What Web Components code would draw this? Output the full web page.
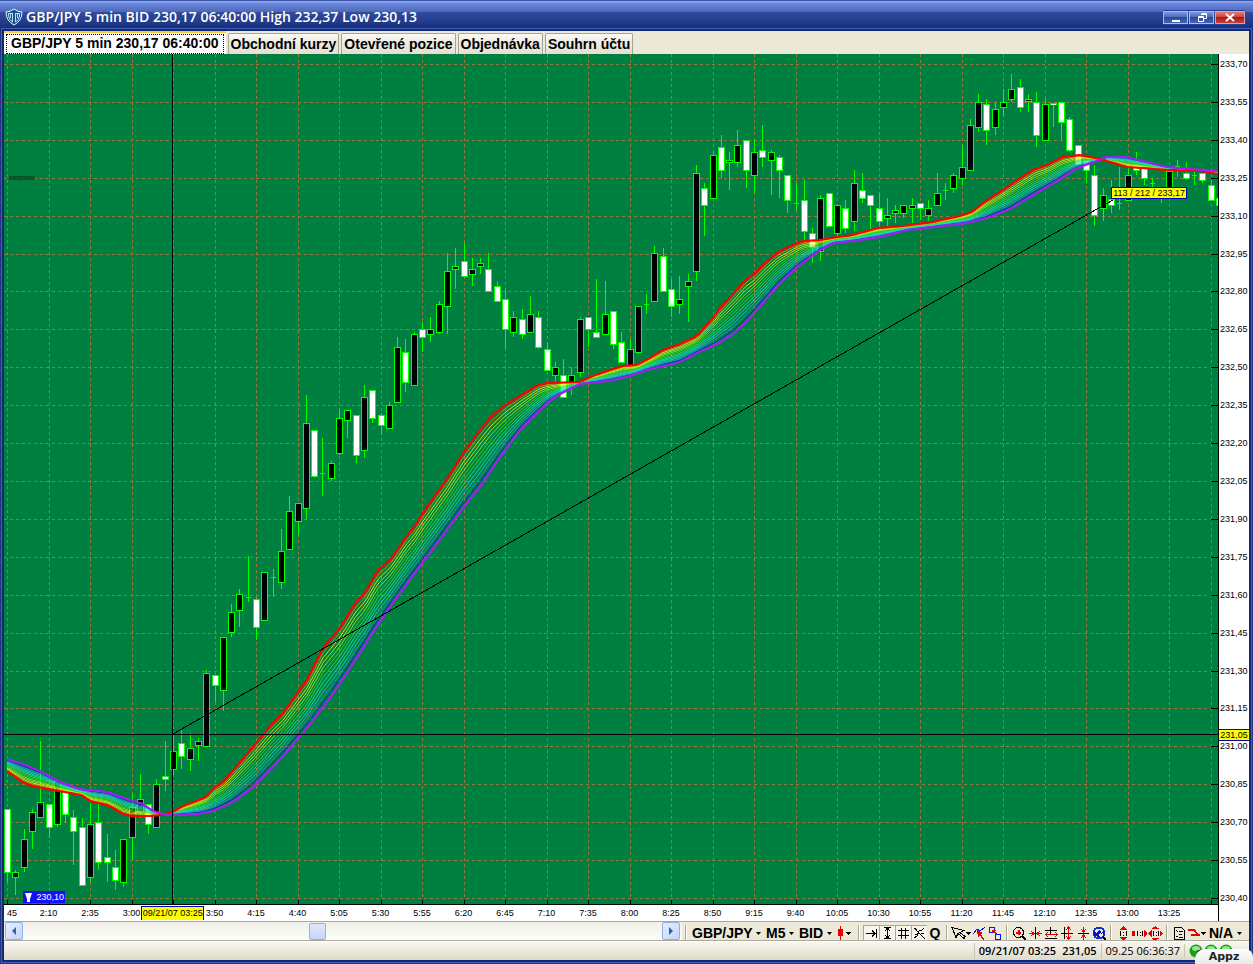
<!DOCTYPE html>
<html lang="cs">
<head>
<meta charset="utf-8">
<title>GBP/JPY 5 min</title>
<style>
    html, body { margin: 0; height: 100%; }
    body { overflow: hidden; font-family: "Liberation Sans", Arial, sans-serif; color: #000; }
</style>
</head>
<body>
<trade-window caption="GBP/JPY 5 min BID 230,17 06:40:00 High 232,37 Low 230,13">
    <tab-strip slot="tabs">
        <tab-item active>GBP/JPY 5 min 230,17 06:40:00</tab-item>
        <tab-item>Obchodní kurzy</tab-item>
        <tab-item>Otevřené pozice</tab-item>
        <tab-item>Objednávka</tab-item>
        <tab-item>Souhrn účtu</tab-item>
    </tab-strip>
    <price-chart></price-chart>
    <chart-toolbar slot="toolbar"></chart-toolbar>
    <status-bar slot="status"></status-bar>
</trade-window>

<script>
class TradeWindow extends HTMLElement {
    constructor() {
        super();
        this.attachShadow({ mode: 'open' });
    }

    connectedCallback() {
        this.shadowRoot.innerHTML = `
            <style>
                :host {
                    display: flex;
                    flex-direction: column;
                    box-sizing: border-box;
                    height: 100vh;
                    position: relative;
                    background: #1c3484;
                }
                header {
                    display: flex;
                    align-items: center;
                    height: 31px;
                    flex: none;
                    box-sizing: border-box;
                    padding: 3px 7px 0 5px;
                    gap: 3px;
                    color: #fff;
                    background: linear-gradient(#3c58a8 0 1px, #8ea6f0 1px 2px, #6f8ae0 3px, #4b68b8 12px, #314c9c 12px, #243f90 20px, #14296f 31px);
                }
                h1 {
                    flex: 1;
                    margin: 0;
                    font: 600 14px/18px "Open Sans", sans-serif;
                    white-space: nowrap;
                    overflow: hidden;
                }
                .controls {
                    display: flex;
                    gap: 1px;
                    border: 1px solid #24409a;
                    border-radius: 3px;
                }
                .controls button {
                    display: block;
                    width: 25px;
                    height: 13px;
                    padding: 0;
                    border: 1px solid #a9bcf0;
                    background: linear-gradient(#7d98e0, #4664b4 50%, #2c4a9c 50%, #4664b4);
                }
                .controls .close {
                    width: 30px;
                    border-color: #e0a0a8;
                    background: linear-gradient(#e08078, #c83c34 50%, #a81c18 50%, #c84038);
                }
                .controls svg { display: block; margin: auto; }
                main {
                    flex: 1;
                    min-height: 0;
                    display: flex;
                    flex-direction: column;
                    margin: 0 4px 4px;
                    background: #ece9d8;
                    box-shadow: 0 0 0 2px #142870, 0 0 0 3px #3f60bc;
                }
                ::slotted(price-chart) { flex: 1; min-height: 0; }
            </style>
            <header>
                <svg width="18" height="18" viewBox="0 0 18 18" aria-hidden="true">
                    <path d="M1 4Q5 4 9 1Q13 4 17 4Q17 13 9 17Q1 13 1 4Z" fill="#1d4f94" stroke="#e6f4fc"/>
                    <path d="M3.500 5.500V8Q4 12 7.500 14V5M14.500 5.500V8Q14 12 10.500 14V5M5.500 5.500V10M12.500 5.500V10M3.500 5.500h4M14.500 5.500h-4" fill="none" stroke="#b4e0f4"/>
                </svg>
                <h1></h1>
                <div class="controls">
                    <button type="button" aria-label="Minimalizovat"><svg width="20" height="11"><path d="M6 8h8v2H6z" fill="#fff"/></svg></button>
                    <button type="button" aria-label="Obnovit"><svg width="20" height="11"><path d="M9.500 1.500h5v5h-3M9 2.500h6M6.500 4.500h5v5h-5zM6 5.500h6" fill="none" stroke="#fff"/></svg></button>
                    <button type="button" class="close" aria-label="Zavřít"><svg width="20" height="11"><path d="M6 2l8 7M14 2l-8 7" stroke="#fff" stroke-width="2"/></svg></button>
                </div>
            </header>
            <main>
                <slot name="tabs"></slot>
                <slot></slot>
                <slot name="toolbar"></slot>
                <slot name="status"></slot>
            </main>`;
        this.shadowRoot.querySelector('h1').textContent = this.getAttribute('caption');
    }
}

class TabStrip extends HTMLElement {
    constructor() {
        super();
        this.attachShadow({ mode: 'open' });
        this.shadowRoot.innerHTML = `
            <style>
                :host {
                    display: flex;
                    flex: none;
                    align-items: flex-end;
                    gap: 2px;
                    height: 23px;
                }
            </style>
            <slot></slot>`;
    }
}

class TabItem extends HTMLElement {
    constructor() {
        super();
        this.attachShadow({ mode: 'open' });
        this.shadowRoot.innerHTML = `
            <style>
                :host { display: block; height: 21px; }
                :host([active]) { height: 23px; }
                button {
                    display: block;
                    box-sizing: border-box;
                    height: 100%;
                    padding: 0 2px;
                    border: 1px solid #a8a493;
                    border-bottom: 0;
                    border-radius: 2px 2px 0 0;
                    background: linear-gradient(#fbfaf7, #eeece4 40%, #e2dfd2);
                    font: bold 14px/20px "Liberation Sans", Arial, sans-serif;
                    color: #000;
                    white-space: nowrap;
                }
                :host([active]) button {
                    border: 0;
                    border-top: 2px solid #ffc73c;
                    background: #fff;
                }
                :host([active]) span {
                    display: block;
                    height: 18px;
                    padding: 0 4px;
                    border: 1px dotted #000;
                    line-height: 17px;
                }
            </style>
            <button type="button"><span><slot></slot></span></button>`;
    }
}

// x, y in plot units; one candle every 8.3 units starting at 7
// [high, body top, body bottom, low, 'b' black | 'w' white | 'd' doji]
const CANDLES = [
    [809,809,873,882,'w'],[870,872,878,895,'b'],[829,839,868,872,'b'],[809,812,832,849,'b'],[741,802,818,818,'b'],
    [804,804,828,838,'w'],[781,781,825,827,'b'],[790,790,815,823,'w'],[810,817,832,865,'w'],[818,827,886,886,'w'],
    [803,824,878,882,'b'],[804,822,863,870,'w'],[834,857,863,882,'w'],[850,867,881,890,'w'],[839,839,883,887,'b'],
    [794,807,838,860,'b'],[774,799,812,818,'b'],[804,804,825,834,'w'],[779,784,828,828,'b'],[741,776,780,791,'w'],
    [735,751,770,775,'b'],[729,743,757,769,'w'],[733,748,760,771,'b'],[738,741,746,761,'b'],[670,673,747,747,'b'],
    [675,675,686,702,'w'],[637,637,691,711,'b'],[604,612,633,637,'b'],[589,594,611,627,'b'],[556,597,597,602,'d'],
    [597,599,628,640,'w'],[572,572,621,621,'b'],[569,577,577,597,'d'],[529,551,583,589,'b'],[496,511,550,550,'b'],
    [503,503,522,536,'b'],[395,423,509,519,'b'],[430,430,477,478,'w'],[438,473,473,496,'d'],[461,463,479,481,'b'],
    [410,418,454,455,'b'],[410,410,421,438,'b'],[415,415,456,463,'w'],[385,397,451,458,'b'],[390,390,419,423,'w'],
    [413,415,426,435,'w'],[402,405,429,429,'b'],[337,347,403,403,'b'],[339,352,383,392,'w'],[332,334,386,386,'b'],
    [322,329,338,352,'w'],[317,329,335,342,'b'],[301,304,333,334,'b'],[253,271,307,334,'b'],[248,266,270,289,'b'],
    [243,261,277,277,'w'],[258,269,275,286,'b'],[258,263,267,274,'b'],[253,269,292,292,'w'],[281,286,302,302,'w'],
    [290,299,330,349,'w'],[311,317,333,337,'b'],[309,319,335,339,'w'],[296,314,333,333,'b'],[311,317,348,349,'w'],
    [342,349,371,371,'w'],[362,367,376,382,'b'],[359,375,398,398,'w'],[367,375,388,395,'b'],[317,319,373,377,'b'],
    [317,317,330,347,'w'],[279,332,338,338,'w'],[281,314,335,335,'b'],[311,311,345,349,'w'],[332,342,363,363,'w'],
    [339,349,366,366,'b'],[306,306,353,354,'b'],[294,304,304,314,'d'],[246,253,302,302,'b'],[248,256,292,292,'w'],
    [279,289,307,317,'w'],[276,299,305,314,'b'],[274,281,287,322,'b'],[165,173,272,281,'b'],[183,188,206,236,'w'],
    [152,155,199,199,'b'],[135,147,171,178,'w'],[152,160,163,190,'b'],[130,145,163,167,'b'],[140,140,171,188,'w'],
    [140,152,176,193,'b'],[125,150,158,167,'w'],[150,152,161,195,'b'],[155,157,171,198,'w'],[175,175,201,213,'w'],
    [183,203,203,210,'d'],[180,200,232,240,'w'],[228,233,248,263,'w'],[195,198,252,261,'b'],[193,193,227,227,'w'],
    [205,205,234,237,'b'],[200,208,229,233,'w'],[170,183,222,231,'b'],[173,190,199,203,'w'],[195,195,206,229,'w'],
    [193,208,222,227,'w'],[198,215,219,226,'b'],[205,210,214,223,'b'],[205,205,214,218,'b'],[198,205,209,223,'b'],
    [203,203,209,220,'w'],[200,208,216,221,'b'],[173,193,206,206,'b'],[183,190,190,200,'d'],[173,175,189,193,'b'],
    [145,167,179,185,'b'],[119,125,171,171,'b'],[94,102,128,132,'b'],[99,104,131,145,'w'],[102,109,128,135,'b'],
    [89,102,108,116,'b'],[74,89,100,102,'b'],[79,87,108,112,'w'],[94,99,102,112,'b'],[92,102,136,147,'w'],
    [99,104,141,141,'b'],[103,103,105,127,'w'],[102,102,123,140,'w'],[117,119,151,152,'w'],[145,145,165,165,'w'],
    [160,160,171,183,'w'],[165,175,216,226,'w'],[188,195,209,221,'b'],[180,199,206,213,'w'],[167,203,203,210,'d'],
    [167,175,201,201,'b'],[152,165,171,175,'w'],[168,168,179,185,'w'],[178,183,183,188,'d'],[187,190,190,203,'d'],
    [171,171,190,190,'b'],[160,166,166,177,'d'],[162,173,179,180,'w'],[168,175,175,185,'d'],[173,173,181,183,'w'],
    [180,185,201,201,'w'],[190,198,206,206,'w']
];

// fastest and slowest averages; the ones between are blended from these two
const FAST = [
    [7,771],[24,783],[32,786],[48,789],[65,792],[82,795],[90,801],[107,805],[115,809],[123,814],[131,816],[148,816],
    [160,815],[173,812],[181,807],[206,797],[214,788],[223,782],[231,773],[242,760],[257,742],[271,725],[283,713],
    [307,680],[323,648],[340,628],[356,602],[365,593],[378,570],[390,560],[398,549],[406,537],[415,526],[423,513],
    [447,479],[464,452],[480,430],[490,418],[505,405],[520,396],[538,385],[547,383],[580,382],[593,376],[613,369],
    [623,366],[637,365],[650,358],[663,350],[680,344],[697,336],[713,318],[720,308],[733,294],[745,280],[755,273],
    [763,265],[778,252],[793,245],[803,241],[820,240],[837,237],[853,235],[878,228],[903,226],[933,222],[960,216],
    [972,212],[983,203],[1003,190],[1022,177],[1035,169],[1047,165],[1063,157],[1080,155],[1100,159],[1117,164],
    [1127,167],[1143,168],[1167,170],[1200,171],[1218,174]
];
const SLOW = [
    [7,759],[25,765],[40,771],[60,782],[80,789],[107,792],[127,799],[143,804],[153,811],[167,815],[197,814],[213,811],
    [233,802],[253,787],[267,773],[283,756],[307,728],[330,698],[347,673],[373,632],[390,607],[408,582],[430,553],
    [463,508],[480,487],[500,457],[520,430],[533,417],[547,403],[560,394],[580,384],[597,382],[613,380],[630,376],
    [647,370],[680,362],[697,353],[717,344],[733,334],[747,321],[762,304],[778,285],[797,267],[820,250],[833,243],
    [853,241],[880,237],[907,230],[933,227],[967,223],[987,218],[1010,209],[1033,195],[1057,181],[1077,168],
    [1097,161],[1107,157],[1127,157],[1147,162],[1167,167],[1190,169],[1218,171]
];
const RIBBON = ['#ff8000', '#ffff00', '#e8f020', '#a0ff10', '#40d820', '#40e040', '#20f0a0', '#20e8c8', '#30c8e0', '#2898e0', '#0010f0'];

class PriceChart extends HTMLElement {
    constructor() {
        super();
        this.attachShadow({ mode: 'open' });
    }

    connectedCallback() {
        this.shadowRoot.innerHTML = `
            <style>
                :host {
                    display: grid;
                    grid-template: minmax(0, 1fr) 16px / minmax(0, 1fr) 31px;
                    background: #fff;
                    font: 9px/12px "Liberation Sans", Arial, sans-serif;
                }
                .plot {
                    position: relative;
                    border-bottom: 1px solid #000;
                    background: #008040;
                    overflow: hidden;
                }
                svg.series { display: block; width: 100%; height: 100%; }
                ol { list-style: none; margin: 0; padding: 0; display: flex; justify-content: space-between; }
                .prices {
                    flex-direction: column;
                    position: relative;
                    border-left: 1px solid #000;
                    padding: 4px 0 1px 1px;
                }
                .times {
                    padding: 2px 49px 0 3px;
                    overflow: hidden;
                    position: relative;
                }
                .times li { width: 0; display: flex; justify-content: center; white-space: nowrap; }
                .times li:first-child { justify-content: flex-start; }
                .corner { border-left: 1px solid #000; }
                .tag {
                    position: absolute;
                    box-sizing: border-box;
                    background: #ff0;
                    white-space: nowrap;
                    text-align: center;
                }
                .cursor-price { left: 0; right: 0; top: 79.3%; border: solid #0000c0; border-width: 1px 0; line-height: 10px; }
                .cursor-time { left: 11.3%; top: 1px; width: 63px; height: 14px; border: 1px solid #0000c0; border-width: 1px 1px 0; }
                .measure { left: 91.2%; top: 15.6%; padding: 0 1px; border: 1px solid #0000c0; line-height: 10px; }
                .low-mark {
                    left: 1.6%;
                    bottom: 1px;
                    display: flex;
                    align-items: center;
                    gap: 3px;
                    padding: 0 1px;
                    background: #1010ff;
                    color: #fff;
                }
                .low-mark svg { flex: none; }
            </style>
            <div class="plot">
                <svg class="series" viewBox="4 54 1214 850" preserveAspectRatio="none" role="img" aria-label="GBP/JPY">
                    ${this._grid()}
                    ${this._candles()}
                    ${this._ribbon()}
                    <path d="M173 734L1113 200M4 734.500H1218M172.500 54V905" stroke="#000" fill="none" shape-rendering="crispEdges"/>
                    <path d="M9 176h26v4H9z" fill="#00401c" fill-opacity=".6"/>
                </svg>
                <span class="tag measure">113 / 212 / 233,17</span>
                <span class="tag low-mark">
                    <svg width="9" height="10"><path d="M1 1h7L6 7v3H3V7z" fill="#fff"/></svg>230,10
                </span>
            </div>
            <ol class="prices">${this._priceLabels()}<span class="tag cursor-price">231,05</span></ol>
            <ol class="times">${this._timeLabels()}<span class="tag cursor-time">09/21/07 03:25</span></ol>
            <div class="corner"></div>`;
    }

    _grid() {
        let lines = '';
        let ticks = '';
        for (let i = 0; i < 23; i++) {
            const y = Math.round(64 + i * 37.91) + 0.5;
            lines += `M4 ${y}H1218`;
            ticks += `M1211 ${y}H1218`;
        }
        for (let i = 0; i < 30; i++) {
            const x = Math.round(7 + i * 41.5) + 0.5;
            lines += `M${x} 54V905`;
            ticks += `M${x} 900V905`;
        }
        return `<g fill="none" shape-rendering="crispEdges">
            <path d="${lines}" stroke="#907c40" stroke-dasharray="3 3"/>
            <path d="${ticks}" stroke="#000"/>
        </g>`;
    }

    _candles() {
        return '<g shape-rendering="crispEdges">' + CANDLES.map(([high, top, bottom, low, kind], i) => {
            const x = Math.round(7 + i * 8.3);
            const wick = `<path d="M${x} ${high}h1V${low}h-1z" fill="#00ff00"/>`;
            if (kind === 'd') {
                return wick + `<path d="M${x - 2} ${top}h5v1h-5z" fill="#00ff00"/>`;
            }
            const height = Math.max(bottom - top, 2);
            const fill = kind === 'b' ? '#000' : '#fff';
            return wick +
                `<rect x="${x - 3}" y="${top}" width="7" height="${height}" fill="#00ff00"/>` +
                `<rect x="${x - 2}" y="${top + 1}" width="5" height="${Math.max(height - 2, 1)}" fill="${fill}"/>`;
        }).join('') + '</g>';
    }

    _valueAt(points, x) {
        const next = points.findIndex(p => p[0] >= x);
        if (next <= 0) {
            return points[next < 0 ? points.length - 1 : 0][1];
        }
        const [x0, y0] = points[next - 1];
        const [x1, y1] = points[next];
        return y0 + (y1 - y0) * (x - x0) / (x1 - x0);
    }

    _ribbon() {
        const line = (t, color, width) => {
            const pts = [];
            for (let x = 7; x < 1222; x += 4) {
                const y = this._valueAt(FAST, x) * (1 - t) + this._valueAt(SLOW, x) * t;
                pts.push(`${x},${Math.round(y * 10) / 10}`);
            }
            return `<polyline points="${pts.join(' ')}" stroke="${color}" stroke-width="${width}"/>`;
        };
        const inner = RIBBON.map((color, i) => line((i + 1) / (RIBBON.length + 1), color, 0.8)).join('');
        return `<g fill="none" stroke-linejoin="round">${inner}${line(0, '#ff0000', 2.2)}${line(1, '#a020f0', 2.2)}</g>`;
    }

    _priceLabels() {
        let html = '';
        for (let p = 23370; p >= 23040; p -= 15) {
            html += `<li>${(p / 100).toFixed(2).replace('.', ',')}</li>`;
        }
        return html;
    }

    _timeLabels() {
        // the hour of the first label lies left of the axis
        let html = '<li>45</li>';
        for (let m = 130; m <= 805; m += 25) {
            // 3:25 is covered by the cursor time
            const label = m === 205 ? '' : `${Math.floor(m / 60)}:${String(m % 60).padStart(2, '0')}`;
            html += `<li>${label}</li>`;
        }
        return html;
    }
}

class ToolCombo extends HTMLElement {
    constructor() {
        super();
        this.attachShadow({ mode: 'open' });
    }

    connectedCallback() {
        this.shadowRoot.innerHTML = `
            <style>
                :host { display: flex; align-items: center; padding: 0 3px 0 2px; gap: 3px; }
                select {
                    appearance: none;
                    border: 0;
                    padding: 0;
                    margin: 0;
                    background: none;
                    font: bold 14px/17px "Liberation Sans", Arial, sans-serif;
                    color: #000;
                }
            </style>
            <select aria-label="${this.getAttribute('label')}"><option>${this.getAttribute('value')}</option></select>
            <svg width="5" height="3" aria-hidden="true"><path d="M0 0h5L2.500 3z"/></svg>`;
    }
}

const R = '#e80000';
const ICONS = {
    candle: `<path d="M5.500 1v14" stroke="${R}"/><path d="M3 4h5v7H3z" fill="${R}"/><path d="M11 7h5l-2.500 3z" fill="#000"/>`,
    toEnd: '<path d="M3 8.500h9M9 5.500l3 3-3 3M13.500 4v9" stroke="#000"/>',
    height: '<path d="M5 2.500h7M5 13.500h7M8.500 3v10M6 6l2.500-3L11 6M6 10l2.500 3L11 10" stroke="#000"/>',
    grid: '<path d="M3 5.500h11M3 10.500h11M6.500 3v11M10.500 3v11" stroke="#000"/>',
    lines: '<path d="M3 3l11 11M3 13l3-2 2-5 3-1 2-2M4 3l2 2M10 8l3 1M4 9l3 1" stroke="#000"/>',
    cursor: '<path d="M1 2.500l4 10 2-4 6 5 1-2-5-4 4-2z" stroke="#000"/><path d="M15 7h5l-2.500 3z" fill="#000"/>',
    trend: `<path d="M2 9l4-5 3 2 5-4" stroke="#1010e8"/><path d="M6 5l6 3-2 1 3 5-1 1-3-5-2 2z" fill="${R}"/>`,
    object: `<path d="M2.500 2.500h5v5h-5zM8.500 9.500h5v5h-5z" stroke="#1010e8"/><path d="M6 6l5 4" stroke="${R}"/><path d="M5 5h4L6 8z" fill="${R}"/>`,
    zoom: `<circle cx="7.500" cy="7.500" r="5" stroke="#000"/><path d="M11 11l4 4" stroke="#000" stroke-width="2"/><path d="M5 7.500h5M7.500 5v5" stroke="${R}" stroke-width="2"/>`,
    narrow: `<path d="M8.500 2v12" stroke="#000"/><path d="M2 8.500h5M15 8.500h-5M4 6l3 2.500L4 11M13 6l-3 2.500L13 11" stroke="${R}"/>`,
    widen: `<path d="M2 5.500h12M2 13.500h12M7.500 2v8" stroke="#000"/><path d="M3 9.500h11M5 7L2.500 9.500 5 12M12 7l2.500 2.500L12 12" stroke="${R}"/>`,
    tall: `<path d="M2 8.500h12M5.500 2v12" stroke="#000"/><path d="M9.500 2v12M7 5l2.500-3L12 5M7 11l2.500 3 2.500-3" stroke="${R}"/>`,
    squash: `<path d="M3 8.500h11" stroke="#000"/><path d="M8.500 2v5M8.500 15v-5M6 4l2.500 3L11 4M6 13l2.500-3 2.500 3" stroke="${R}"/>`,
    refresh: '<circle cx="8" cy="8" r="5.500" stroke="#1030d8" stroke-width="2"/><path d="M3 11V6l2 2 3-3 2 2-3 3 2 2zM13 4v6l-2-2-2 3" fill="#1010c8"/><path d="M12 12l3 3" stroke="#000" stroke-width="2"/>',
    fitV: `<path d="M5.500 6v5M11.500 6v5M8.500 7v1M8.500 10v1" stroke="#000"/><path d="M8.500 1l4 4h-8zM8.500 16l4-4h-8z" fill="${R}"/>`,
    fitH: `<path d="M6.500 6v5M11.500 6v5M9 7v1M9 10v1" stroke="#000"/><path d="M1 6h3v5H1zM13 5l4 3.500-4 3.500z" fill="${R}"/>`,
    fitAll: `<path d="M6.500 6v5M11.500 6v5M9 7v1M9 10v1" stroke="#000"/><path d="M1 8.500l4-3.500v7zM16 8.500l-3-3.500v7zM8.500 1l4 3h-8zM8.500 16l4-3h-8z" fill="${R}"/>`,
    report: '<path d="M3.500 2.500h7l3 3v9h-10zM5 5l2 2M5 11l2 1M8 7l4-1M8 10l3-1M8 12h4" stroke="#000"/>',
    line: `<path d="M1 4h7l3 5H9L7 6H1zM4 9h9v2H4z" fill="${R}"/><path d="M14 7h5l-2.500 3z" fill="#000"/>`
};

class ToolButton extends HTMLElement {
    constructor() {
        super();
        this.attachShadow({ mode: 'open' });
    }

    connectedCallback() {
        const wide = this.hasAttribute('wide');
        this.shadowRoot.innerHTML = `
            <style>
                :host { display: block; width: 16px; height: 17px; }
                :host([wide]) { width: 20px; }
                button {
                    display: block;
                    box-sizing: border-box;
                    width: 100%;
                    height: 17px;
                    padding: 0;
                    border: 0;
                    background: none;
                    overflow: hidden;
                    font: bold 14px/17px "Liberation Sans", Arial, sans-serif;
                    color: #000;
                }
                :host([pressed]) button {
                    box-shadow: inset 1px 1px #aca899;
                    background: #f6f4ec;
                }
                svg { display: block; }
            </style>
            <button type="button" aria-label="${this.getAttribute('label')}"></button>`;
        const button = this.shadowRoot.querySelector('button');
        const icon = this.getAttribute('icon');
        if (icon) {
            button.innerHTML = `<svg width="${wide ? 20 : 16}" height="17" fill="none" shape-rendering="crispEdges">${ICONS[icon]}</svg>`;
        } else {
            button.textContent = this.getAttribute('text');
        }
    }
}

class ChartToolbar extends HTMLElement {
    constructor() {
        super();
        this.attachShadow({ mode: 'open' });
    }

    connectedCallback() {
        this.shadowRoot.innerHTML = `
            <style>
                :host {
                    display: flex;
                    flex: none;
                    height: 20px;
                    box-sizing: border-box;
                    border-top: 1px solid #aca899;
                    border-bottom: 1px solid #aca899;
                    background: #ece9d8;
                }
                .scroll {
                    flex: 1;
                    min-width: 0;
                    display: flex;
                    background: linear-gradient(#f0efe8, #fefefb);
                    padding: 0 2px 0 1px;
                }
                .scroll button {
                    width: 18px;
                    height: 18px;
                    padding: 0;
                    border: 1px solid #8fb0f0;
                    border-radius: 2px;
                    background: linear-gradient(135deg, #e8effe, #c4d4fa);
                }
                .scroll svg { display: block; margin: auto; }
                input {
                    appearance: none;
                    flex: 1;
                    min-width: 0;
                    height: 18px;
                    margin: 0;
                    background: none;
                }
                input::-webkit-slider-thumb {
                    appearance: none;
                    width: 17px;
                    height: 17px;
                    border: 1px solid #8fb0f0;
                    border-radius: 2px;
                    background: linear-gradient(#dfe8fd, #c4d4fa);
                }
                .tools {
                    display: flex;
                    align-items: flex-start;
                    padding: 3px 4px 0 0;
                    overflow: hidden;
                }
                hr {
                    width: 1px;
                    height: 15px;
                    margin: 0 3px;
                    border: 0;
                    border-left: 1px solid #aca899;
                    background: #fff;
                }
            </style>
            <div class="scroll">
                <button type="button" aria-label="Zpět"><svg width="6" height="8"><path d="M5 0v8L1 4z" fill="#3060b0"/></svg></button>
                <input type="range" min="0" max="100" value="46" aria-label="Posun grafu">
                <button type="button" aria-label="Vpřed"><svg width="6" height="8"><path d="M1 0v8l4-4z" fill="#3060b0"/></svg></button>
            </div>
            <div class="tools">
                <hr>
                <tool-combo label="Symbol" value="GBP/JPY"></tool-combo>
                <tool-combo label="Perioda" value="M5"></tool-combo>
                <tool-combo label="Cena" value="BID"></tool-combo>
                <tool-button wide icon="candle" label="Typ grafu"></tool-button>
                <hr>
                <tool-button pressed icon="toEnd" label="Na konec"></tool-button>
                <tool-button pressed icon="height" label="Výška"></tool-button>
                <tool-button pressed icon="grid" label="Mřížka"></tool-button>
                <tool-button pressed icon="lines" label="Čáry"></tool-button>
                <tool-button text="Q" label="Q"></tool-button>
                <hr>
                <tool-button wide icon="cursor" label="Kurzor"></tool-button>
                <tool-button icon="trend" label="Indikátor"></tool-button>
                <tool-button icon="object" label="Objekt"></tool-button>
                <hr>
                <tool-button icon="zoom" label="Lupa"></tool-button>
                <tool-button icon="narrow" label="Zúžit"></tool-button>
                <tool-button icon="widen" label="Rozšířit"></tool-button>
                <tool-button icon="tall" label="Zvýšit"></tool-button>
                <tool-button icon="squash" label="Snížit"></tool-button>
                <tool-button icon="refresh" label="Obnovit"></tool-button>
                <hr>
                <tool-button icon="fitV" label="Svisle 1:1"></tool-button>
                <tool-button icon="fitH" label="Vodorovně 1:1"></tool-button>
                <tool-button icon="fitAll" label="Vše 1:1"></tool-button>
                <hr>
                <tool-button icon="report" label="Přehled"></tool-button>
                <tool-button wide icon="line" label="Styl čáry"></tool-button>
                <tool-combo label="Šablona" value="N/A"></tool-combo>
            </div>`;
    }
}

class StatusBar extends HTMLElement {
    constructor() {
        super();
        this.attachShadow({ mode: 'open' });
    }

    connectedCallback() {
        const light = '<svg width="14" height="14"><circle cx="7" cy="7" r="6.500" fill="#18a018"/><ellipse cx="7" cy="4.500" rx="4" ry="2.500" fill="#90e890"/><path d="M8 7h6M11 7v5" stroke="#000"/></svg>';
        this.shadowRoot.innerHTML = `
            <style>
                :host {
                    display: flex;
                    flex: none;
                    height: 19px;
                    box-sizing: border-box;
                    justify-content: flex-end;
                    align-items: center;
                    border-top: 1px solid #fff;
                    padding-right: 16px;
                    background: linear-gradient(#f7f6f0, #ece9dc 50%, #dedac8);
                    font: 11px/16px "Open Sans", "Noto Sans", sans-serif;
                }
                .cell {
                    display: flex;
                    gap: 6px;
                    padding: 0 4px;
                    border-left: 1px solid #c9c6b6;
                }
                .quote { font-weight: 600; }
                .lights { gap: 1px; padding-right: 0; }
                .appz {
                    position: absolute;
                    right: 0;
                    bottom: 0;
                    width: 58px;
                    height: 15px;
                    border-radius: 10px 8px 0 0;
                    background: linear-gradient(#fff, #e9e9ea);
                    text-align: center;
                    font: bold 11px/15px "DejaVu Sans", sans-serif;
                    color: #222;
                }
            </style>
            <div class="cell quote"><span>09/21/07 03:25</span><span>231,05</span></div>
            <div class="cell">09.25 06:36:37</div>
            <div class="cell lights">${light}${light}${light}</div>
            <div class="appz">Appz</div>`;
    }
}

customElements.define('tab-strip', TabStrip);
customElements.define('tab-item', TabItem);
customElements.define('price-chart', PriceChart);
customElements.define('tool-combo', ToolCombo);
customElements.define('tool-button', ToolButton);
customElements.define('chart-toolbar', ChartToolbar);
customElements.define('status-bar', StatusBar);
customElements.define('trade-window', TradeWindow);
</script>
</body>
</html>
